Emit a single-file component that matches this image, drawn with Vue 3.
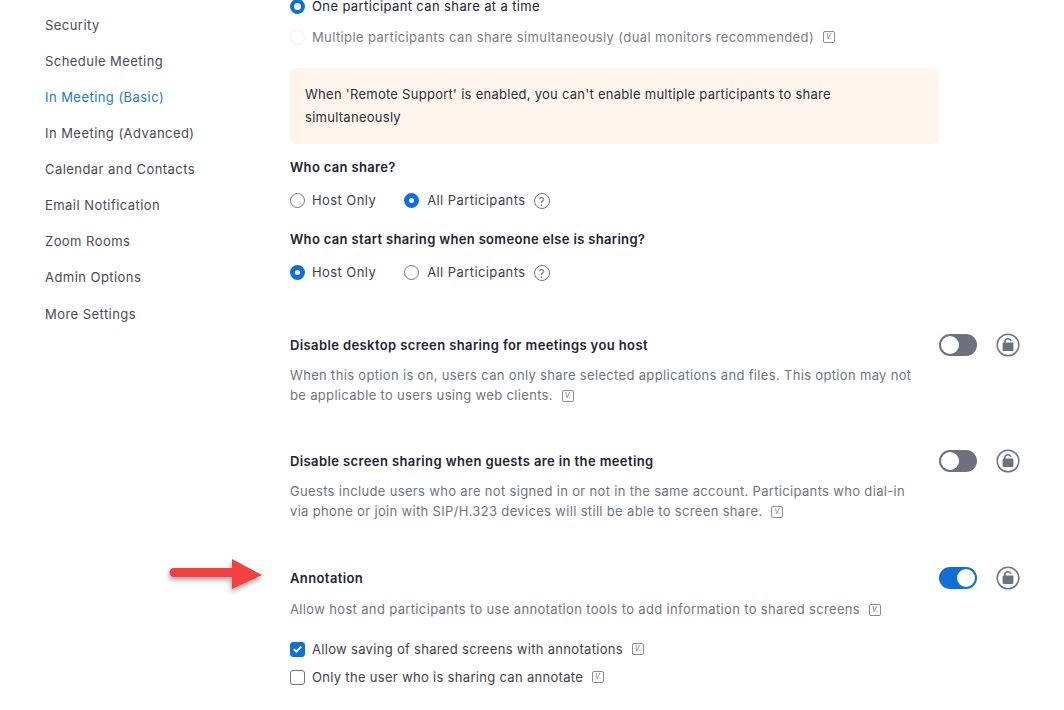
<script setup>
const navItems = [
  'Security',
  'Schedule Meeting',
  'In Meeting (Basic)',
  'In Meeting (Advanced)',
  'Calendar and Contacts',
  'Email Notification',
  'Zoom Rooms',
  'Admin Options',
  'More Settings'
]
</script>

<template>
  <div class="page">
    <aside class="sidebar">
      <a
        v-for="item in navItems"
        :key="item"
        class="nav-item"
        :class="{ active: item === 'In Meeting (Basic)' }"
      >{{ item }}</a>
    </aside>

    <main class="content">
      <div class="radio-row first">
        <span class="radio checked wide-dot"></span>
        <span>One participant can share at a time</span>
      </div>
      <div class="radio-row second disabled">
        <span class="radio faint"></span>
        <span>Multiple participants can share simultaneously (dual monitors recommended)</span>
        <span class="v-badge">V.</span>
      </div>

      <div class="notice">When 'Remote Support' is enabled, you can't enable multiple participants to share simultaneously</div>

      <h4 class="question q1">Who can share?</h4>
      <div class="choice-row">
        <span class="choice"><span class="radio"></span>Host Only</span>
        <span class="choice"><span class="radio checked"></span>All Participants</span>
        <span class="help">?</span>
      </div>

      <h4 class="question q2">Who can start sharing when someone else is sharing?</h4>
      <div class="choice-row">
        <span class="choice"><span class="radio checked"></span>Host Only</span>
        <span class="choice"><span class="radio"></span>All Participants</span>
        <span class="help">?</span>
      </div>

      <section class="setting s1">
        <div class="setting-text">
          <h4 class="setting-title">Disable desktop screen sharing for meetings you host</h4>
          <p class="setting-desc">When this option is on, users can only share selected applications and files. This option may not be applicable to users using web clients.<span class="v-badge">V.</span></p>
        </div>
        <span class="toggle"><span class="knob"></span></span>
        <svg class="lock" viewBox="0 0 24 24" width="24" height="24">
          <circle cx="12" cy="12" r="10.8" fill="#fff" stroke="#747487" stroke-width="1.5" />
          <path d="M8.8 10V8.8a3.2 3.2 0 0 1 6.200-1" fill="none" stroke="#6e7080" stroke-width="1.5" />
          <rect x="6.600" y="9.600" width="10.800" height="8.400" rx="1" fill="#6e7080" />
        </svg>
      </section>

      <section class="setting s2">
        <div class="setting-text">
          <h4 class="setting-title">Disable screen sharing when guests are in the meeting</h4>
          <p class="setting-desc">Guests include users who are not signed in or not in the same account. Participants who dial-in via phone or join with SIP/H.323 devices will still be able to screen share.<span class="v-badge">V.</span></p>
        </div>
        <span class="toggle"><span class="knob"></span></span>
        <svg class="lock" viewBox="0 0 24 24" width="24" height="24">
          <circle cx="12" cy="12" r="10.8" fill="#fff" stroke="#747487" stroke-width="1.5" />
          <path d="M8.8 10V8.8a3.2 3.2 0 0 1 6.200-1" fill="none" stroke="#6e7080" stroke-width="1.5" />
          <rect x="6.600" y="9.600" width="10.800" height="8.400" rx="1" fill="#6e7080" />
        </svg>
      </section>

      <section class="setting s3">
        <div class="setting-text">
          <h4 class="setting-title">Annotation</h4>
          <p class="setting-desc single">Allow host and participants to use annotation tools to add information to shared screens<span class="v-badge">V.</span></p>
        </div>
        <span class="toggle on"><span class="knob"></span></span>
        <svg class="lock" viewBox="0 0 24 24" width="24" height="24">
          <circle cx="12" cy="12" r="10.8" fill="#fff" stroke="#747487" stroke-width="1.5" />
          <path d="M8.8 10V8.8a3.2 3.2 0 0 1 6.200-1" fill="none" stroke="#6e7080" stroke-width="1.5" />
          <rect x="6.600" y="9.600" width="10.800" height="8.400" rx="1" fill="#6e7080" />
        </svg>
      </section>

      <div class="check-row c1">
        <span class="checkbox checked">
          <svg viewBox="0 0 14 14" width="14" height="14">
            <path d="M3 7.2l2.7 2.7L11 4.400" fill="none" stroke="#fff" stroke-width="2" />
          </svg>
        </span>
        <span>Allow saving of shared screens with annotations</span>
        <span class="v-badge">V.</span>
      </div>
      <div class="check-row c2">
        <span class="checkbox"></span>
        <span>Only the user who is sharing can annotate</span>
        <span class="v-badge">V.</span>
      </div>
    </main>

    <svg class="arrow" viewBox="0 0 104 44" width="104" height="44">
      <defs>
        <filter id="arrow-shadow" x="-20%" y="-40%" width="140%" height="190%">
          <feDropShadow dx="-1" dy="3" stdDeviation="2.5" flood-color="#000" flood-opacity="0.35" />
        </filter>
      </defs>
      <path
        d="M10 13H68V4L98 20L68 34V22H10a4.500 4.500 0 0 1 0-9z"
        fill="#f43f3f"
        filter="url(#arrow-shadow)"
      />
    </svg>
  </div>
</template>

<style>
html,
body {
  margin: 0;
  background: #fff;
}
</style>

<style scoped>
.page {
  position: relative;
  display: flex;
  width: 1064px;
  height: 710px;
  overflow: hidden;
  background: #fff;
  font-family: Inter, "Liberation Sans", sans-serif;
  font-size: 13px;
  letter-spacing: 0.33px;
  color: #232333;
}

.sidebar {
  display: flex;
  flex: 0 0 290px;
  flex-direction: column;
  box-sizing: border-box;
  padding: 16px 0 0 45px;
  letter-spacing: 0.45px;
}

.nav-item {
  height: 36px;
  line-height: 18px;
  color: #4a4a57;
}

.nav-item:last-child {
  margin-top: 1px;
}

.nav-item.active {
  color: #1f7cc7;
}

.content {
  flex: 0 0 729px;
}

.radio-row {
  display: flex;
  align-items: center;
  height: 12px;
  line-height: 12px;
  letter-spacing: 0.38px;
}

.second {
  height: 18px;
  margin-top: 16px;
  line-height: 18px;
}

.disabled {
  color: #7c7c88;
}

.radio {
  flex: none;
  box-sizing: border-box;
  width: 15px;
  height: 15px;
  margin-right: 7px;
  border: 1px solid #747487;
  border-radius: 50%;
  background: #fff;
}

.radio.checked {
  border: 5.5px solid #0e6fd6;
}

.radio.wide-dot {
  border-width: 4.5px;
}

.radio.faint {
  border-color: #f2f2f4;
}

.notice {
  box-sizing: border-box;
  width: 649px;
  height: 76px;
  margin-top: 22px;
  padding: 14.5px 15px;
  border-radius: 6px;
  background: #fdf5ec;
  line-height: 23px;
  letter-spacing: 0.27px;
  color: #2d2d3a;
}

.question {
  margin: 0;
  font-size: 13px;
  font-weight: 600;
  line-height: 18px;
  letter-spacing: 0.33px;
}

.q1 {
  margin-top: 14px;
}

.q2 {
  margin-top: 20px;
}

.choice-row {
  display: flex;
  align-items: center;
  height: 20px;
  margin-top: 14px;
  letter-spacing: 0.42px;
  color: #3f3f4c;
}

.choice {
  display: flex;
  align-items: center;
  margin-right: 28px;
}

.choice:nth-child(2) {
  margin-right: 8px;
}

.choice:nth-child(2) .radio {
  margin-right: 8px;
}

.help {
  display: flex;
  align-items: center;
  justify-content: center;
  box-sizing: border-box;
  width: 16px;
  height: 16px;
  margin-top: 2px;
  border: 1px solid #747487;
  border-radius: 50%;
  font-size: 12px;
  letter-spacing: 0;
  color: #747487;
}

.v-badge {
  display: inline-flex;
  align-items: center;
  justify-content: center;
  box-sizing: border-box;
  width: 12px;
  height: 12px;
  margin-left: 9px;
  border: 1px solid #8b8b96;
  border-radius: 2px;
  vertical-align: middle;
  font-size: 7px;
  font-style: italic;
  letter-spacing: 0;
  color: #747487;
}

.setting {
  display: flex;
  align-items: flex-start;
}

.s1 {
  margin-top: 54px;
}

.s2 {
  margin-top: 47px;
}

.s3 {
  margin-top: 48px;
}

.setting-text {
  flex: 0 0 649px;
}

.setting-title {
  margin: 0;
  font-size: 13px;
  font-weight: 600;
  line-height: 18px;
  letter-spacing: 0.39px;
}

.setting-desc {
  width: 630px;
  margin: 11px 0 0;
  line-height: 20px;
  color: #6e7680;
}

.setting-desc.single {
  margin-top: 12px;
  letter-spacing: 0.35px;
}

.toggle {
  position: relative;
  flex: none;
  box-sizing: border-box;
  width: 38px;
  height: 22px;
  margin-top: -2px;
  border-radius: 11px;
  background: #6e7080;
}

.toggle .knob {
  position: absolute;
  top: 2px;
  left: 2px;
  width: 18px;
  height: 18px;
  border-radius: 50%;
  background: #fff;
}

.toggle.on {
  background: #0e6fd6;
}

.toggle.on .knob {
  left: 18px;
}

.lock {
  flex: none;
  margin: -3px 0 0 19px;
}

.check-row {
  display: flex;
  align-items: center;
  height: 18px;
  line-height: 18px;
  letter-spacing: 0.31px;
  color: #3f3f4c;
}

.c1 {
  margin-top: 21px;
}

.c2 {
  margin-top: 10px;
}

.checkbox {
  display: flex;
  flex: none;
  align-items: center;
  justify-content: center;
  box-sizing: border-box;
  width: 15px;
  height: 15px;
  margin-right: 7px;
  border: 1px solid #747487;
  border-radius: 3px;
}

.checkbox.checked {
  border-color: #0e6fd6;
  background: #0e6fd6;
}

.arrow {
  position: absolute;
  top: 555px;
  left: 164px;
}
</style>
